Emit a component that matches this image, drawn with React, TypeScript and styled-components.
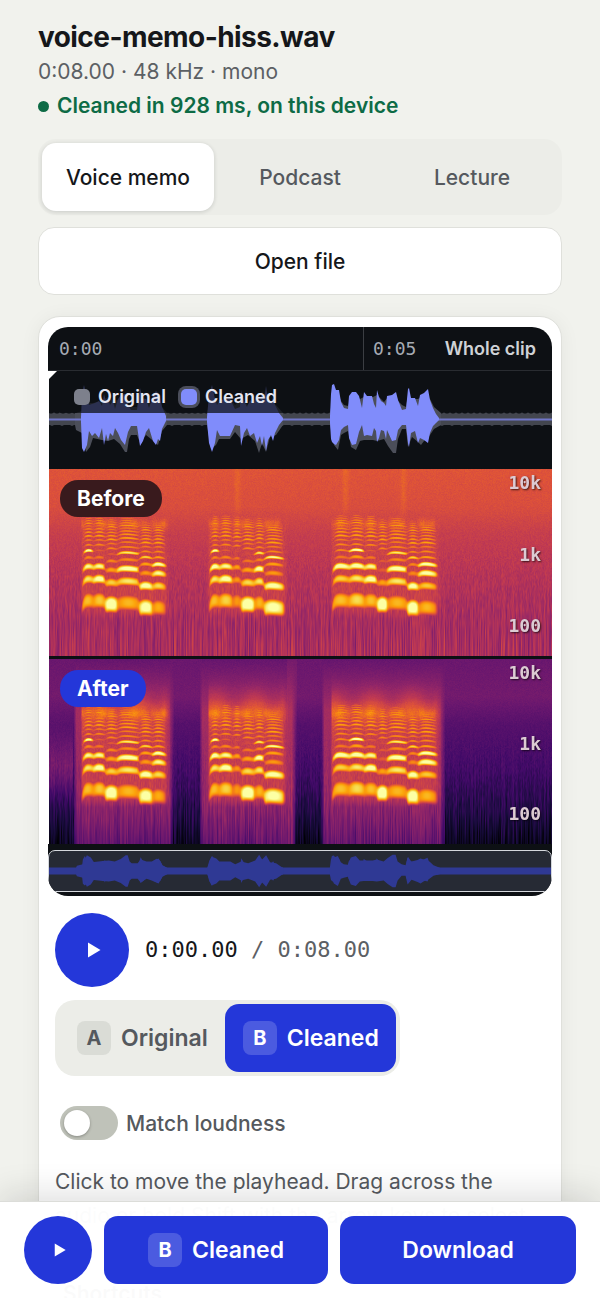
import React, { useLayoutEffect, useRef, useState } from 'react';
import styled, { createGlobalStyle, css } from 'styled-components';

const sans = "Inter, 'Liberation Sans', sans-serif";
const mono = "'DejaVu Sans Mono', 'Liberation Mono', monospace";
const blue = '#2437d9';

const GlobalStyle = createGlobalStyle`
  * { box-sizing: border-box; }
  body { margin: 0; background: #f1f2ed; color: #15171a; font-family: ${sans}; }
  button { border: 0; margin: 0; padding: 0; background: none; font: inherit; color: inherit; cursor: pointer; }
  h1, h2, p { margin: 0; }
`;

const Page = styled.div`
  height: 100vh;
  overflow-y: auto;
  scrollbar-width: none;
  padding: 19px 38px 0;
`;
const Title = styled.h1`
  font-size: 28px;
  line-height: 36px;
  font-weight: 700;
  letter-spacing: -0.02em;
`;
const Meta = styled.p`
  font-size: 21px;
  line-height: 34px;
  color: #5c6064;
`;
const Status = styled.p`
  display: flex;
  align-items: center;
  gap: 8px;
  font-size: 21px;
  line-height: 34px;
  font-weight: 600;
  color: #0d6b45;
  &::before { content: ''; width: 11px; height: 11px; border-radius: 50%; background: currentColor; }
`;
const Tabs = styled.div`
  display: grid;
  grid-template-columns: repeat(3, 1fr);
  margin-top: 16px;
  padding: 4px;
  border-radius: 18px;
  background: #ecede8;
`;
const Tab = styled.button<{ $on: boolean }>`
  height: 68px;
  border-radius: 14px;
  font-size: 21px;
  font-weight: 500;
  color: #55595e;
  ${p => p.$on && css`
    background: #fff;
    color: #15171a;
    box-shadow: 0 1px 4px rgba(20, 22, 26, 0.16);
  `}
`;
const OpenButton = styled.button`
  width: 100%;
  height: 68px;
  margin-top: 12px;
  border: 1px solid #dfe0db;
  border-radius: 16px;
  background: #fff;
  font-size: 21px;
  font-weight: 500;
`;
const Card = styled.main`
  margin-top: 21px;
  padding: 10px 9px;
  border: 1px solid #dfe0db;
  border-radius: 22px 22px 0 0;
  background: #fff;
  box-shadow: 0 2px 20px rgba(20, 22, 26, 0.06);
`;
const Editor = styled.section`
  overflow: hidden;
  border-radius: 20px;
  background: #0d1014;
`;
const Ruler = styled.div`
  display: grid;
  grid-template-columns: 5fr 3fr;
  height: 44px;
  border-bottom: 1px solid #292c31;
  color: #a6abb3;
  font: 18px/43px ${mono};
`;
const Tick = styled.div`
  display: flex;
  justify-content: space-between;
  padding: 0 16px 0 11px;
  & + & { padding-left: 9px; border-left: 1px solid #3b3e43; }
`;
const ClipButton = styled.button`
  color: #cfd2d6;
  font: 600 18px/43px ${sans};
`;
const Lane = styled.div`
  position: relative;
  margin-bottom: 3px;
`;
const WaveLane = styled(Lane)`
  height: 98px;
  margin-bottom: 0;
`;
const Drawing = styled.svg`
  display: block;
  width: 100%;
  height: 100%;
`;
const Spectrum = styled.canvas`
  display: block;
  width: 100%;
`;
const Legend = styled.div`
  position: absolute;
  top: 10px;
  left: 12px;
  display: flex;
  gap: 15px;
  padding: 0 14px;
  background: rgba(13, 16, 20, 0.74);
`;
const LegendItem = styled.button<{ $color: string; $ring?: boolean }>`
  display: flex;
  align-items: center;
  gap: 8px;
  font-size: 18px;
  line-height: 32px;
  font-weight: 600;
  color: #e4e6f2;
  &::before {
    content: '';
    width: 16px;
    height: 16px;
    border-radius: 5px;
    background: ${p => p.$color};
    box-shadow: ${p => (p.$ring ? '0 0 0 3px #4b4e5b' : 'none')};
  }
`;
const Pill = styled.h2<{ $bg: string }>`
  position: absolute;
  top: 11px;
  left: 12px;
  padding: 0 17px;
  border-radius: 18px;
  background: ${p => p.$bg};
  color: #fff;
  font-size: 21px;
  line-height: 37px;
  font-weight: 700;
`;
const Scale = styled.div`
  position: absolute;
  inset: 1px 11px 17px auto;
  display: flex;
  flex-direction: column;
  justify-content: space-between;
  align-items: flex-end;
  color: #dccbd3;
  font: 700 18px/26px ${mono};
  text-shadow: 1px 1px 2px rgba(0, 0, 0, 0.7);
`;
const Playhead = styled.div`
  position: absolute;
  top: 44px;
  left: 0;
  width: 1px;
  height: 473px;
  background: #fff;
  &::before {
    content: '';
    position: absolute;
    top: 0;
    left: 0;
    border-top: 9px solid #fff;
    border-right: 9px solid transparent;
  }
`;
const Stage = styled.div`
  position: relative;
`;
const Overview = styled.div`
  height: 42px;
  margin: 6px 0 4px;
  border: 1px solid #d5d8dd;
  border-radius: 7px;
  background: #262a34;
`;
const Controls = styled.div`
  padding: 17px 7px 0;
`;
const Transport = styled.div`
  display: flex;
  align-items: center;
  gap: 16px;
`;
const PlayButton = styled.button<{ $size: number }>`
  display: grid;
  place-items: center;
  flex: none;
  width: ${p => p.$size}px;
  height: ${p => p.$size}px;
  padding-left: 3px;
  border-radius: 50%;
  background: ${blue};
`;
const Clock = styled.div`
  font: 22px/34px ${mono};
  color: #5c6064;
  white-space: pre;
  b { color: #15171a; font-weight: 400; }
`;
const Compare = styled.div`
  display: inline-flex;
  margin-top: 13px;
  padding: 4px;
  border-radius: 20px;
  background: #ecede8;
`;
const Side = styled.button<{ $on: boolean }>`
  display: flex;
  align-items: center;
  gap: 10px;
  height: 68px;
  padding: 0 17px 0 18px;
  border-radius: 14px;
  font-size: 23px;
  font-weight: 600;
  color: ${p => (p.$on ? '#fff' : '#55595e')};
  background: ${p => (p.$on ? blue : 'transparent')};
`;
const Key = styled.kbd<{ $on: boolean }>`
  width: 34px;
  border-radius: 8px;
  background: ${p => (p.$on ? 'rgba(255,255,255,0.18)' : '#dadcd6')};
  font: 700 20px/34px ${sans};
  text-align: center;
`;
const LoudnessRow = styled.label`
  display: flex;
  align-items: center;
  gap: 8px;
  height: 68px;
  margin-top: 13px;
  padding-left: 5px;
  font-size: 21px;
  font-weight: 500;
  color: #55595e;
`;
const Switch = styled.input`
  appearance: none;
  width: 58px;
  height: 34px;
  margin: 0;
  padding: 4px;
  border-radius: 17px;
  background: #bfc2b9;
  &::before {
    content: '';
    display: block;
    width: 26px;
    height: 26px;
    border-radius: 50%;
    background: #fff;
    box-shadow: 0 1px 3px rgba(0, 0, 0, 0.3);
  }
  &:checked { background: ${blue}; }
  &:checked::before { margin-left: 24px; }
`;
const Hint = styled.p`
  margin-top: 8px;
  font-size: 21px;
  line-height: 34px;
  color: #55595e;
`;
const Shortcuts = styled.h2`
  padding: 44px 8px 0;
  font-size: 21px;
  line-height: 34px;
  font-weight: 600;
`;
const BottomBar = styled.footer`
  position: fixed;
  inset: auto 0 0;
  display: grid;
  grid-template-columns: 68px 19fr 20fr;
  gap: 12px;
  padding: 14px 24px;
  border-top: 1px solid #dcddd9;
  background: rgba(255, 255, 255, 0.98);
  box-shadow: 0 -8px 32px rgba(20, 22, 26, 0.13);
`;
const BarButton = styled.button`
  display: flex;
  align-items: center;
  justify-content: center;
  gap: 10px;
  height: 68px;
  border-radius: 14px;
  background: ${blue};
  color: #fff;
  font-size: 23px;
  font-weight: 600;
`;

/* Outline of each phrase, as [x, above, below] in lane units. */
type Env = [number, number, number][];
const phrases: Env[] = [
  [[33, 2, 3], [34, 26, 29], [36, 34, 33], [39, 22, 26], [41, 14, 12], [44, 15, 17], [47, 16, 14], [51, 18, 19], [54, 13, 9], [56, 25, 26], [58, 18, 15], [60, 20, 22], [62, 14, 14], [65, 18, 17], [67, 10, 9], [70, 20, 14], [73, 24, 21], [77, 25, 26], [80, 14, 13], [83, 9, 7], [89, 9, 7], [92, 31, 27], [95, 20, 22], [98, 20, 13], [101, 11, 9], [105, 24, 22], [108, 28, 26], [110, 26, 20], [112, 22, 22], [114, 12, 10], [118, 3, 2]],
  [[159, 2, 3], [161, 24, 24], [164, 34, 33], [167, 20, 24], [169, 14, 11], [172, 19, 17], [182, 20, 17], [187, 10, 6], [192, 12, 7], [193, 29, 27], [196, 18, 14], [199, 12, 9], [202, 19, 17], [206, 16, 14], [209, 25, 24], [212, 18, 17], [214, 28, 27], [216, 18, 17], [218, 33, 32], [220, 20, 21], [223, 16, 16], [225, 22, 22], [227, 14, 14], [231, 6, 6], [235, 1, 1]],
  [[282, 3, 4], [283, 25, 20], [284, 34, 23], [286, 35, 25], [288, 29, 26], [291, 29, 21], [293, 17, 11], [296, 11, 8], [300, 10, 6], [301, 23, 19], [304, 27, 26], [308, 27, 25], [311, 23, 13], [314, 11, 6], [316, 27, 17], [319, 23, 16], [324, 23, 17], [326, 15, 9], [328, 11, 12], [329, 29, 23], [331, 22, 19], [333, 18, 11], [336, 16, 12], [338, 13, 20], [339, 23, 11], [344, 24, 22], [348, 27, 21], [350, 19, 11], [354, 9, 6], [358, 10, 6], [360, 30, 24], [361, 31, 28], [363, 21, 14], [367, 21, 12], [370, 13, 24], [372, 24, 19], [376, 26, 21], [380, 30, 24], [382, 19, 14], [385, 11, 7], [388, 5, 4], [391, 1, 1]],
];
/* The original recording under the cleaned one; it mostly shows below the axis. */
const originals: Env[] = [
  [[27, 6, 6], [28, 6, 11], [34, 8, 14], [38, 20, 33], [42, 16, 28], [45, 16, 19], [54, 18, 21], [60, 22, 22], [66, 18, 20], [72, 20, 25], [77, 25, 33], [79, 20, 33], [81, 14, 20], [83, 12, 16], [89, 12, 16], [92, 24, 24], [98, 20, 16], [103, 14, 20], [110, 24, 26], [114, 12, 12], [119, 6, 6]],
  [[159, 6, 6], [163, 20, 30], [168, 18, 26], [171, 19, 20], [182, 20, 20], [187, 14, 13], [193, 20, 20], [200, 14, 16], [207, 20, 22], [211, 22, 34], [214, 20, 24], [218, 28, 33], [222, 18, 18], [228, 14, 16], [235, 6, 6]],
  [[282, 6, 6], [286, 28, 26], [290, 26, 31], [293, 18, 16], [296, 14, 14], [300, 13, 12], [303, 22, 28], [308, 24, 31], [312, 20, 22], [316, 22, 21], [325, 22, 21], [329, 24, 22], [336, 17, 20], [340, 22, 27], [345, 24, 34], [348, 24, 34], [350, 18, 20], [354, 14, 10], [358, 12, 10], [360, 24, 28], [364, 20, 18], [370, 20, 23], [373, 22, 26], [376, 24, 22], [382, 20, 16], [386, 12, 10], [393, 6, 6]],
];
const shape = (env: Env, mid: number, k: number) =>
  'M' + env.map(([x, a]) => `${x} ${mid - a * k}`).join('L') + 'L' +
  [...env].reverse().map(([x, , b]) => `${x} ${mid + b * k}`).join('L') + 'Z';
const hiss = (seed: number) =>
  'M0 48' + Array.from({ length: 253 }, (_, i) => `L${i * 2} ${42.5 - ((i * seed) % 3 === 0 ? 1 : 0)}`).join('') +
  Array.from({ length: 253 }, (_, i) => `L${504 - i * 2} ${54 + ((i * seed) % 5 === 0 ? 1 : 0)}`).join('') + 'Z';

const Waveform = () => (
  <Drawing viewBox="0 0 504 98" preserveAspectRatio="none" role="img" aria-label="Waveform">
    <path d={hiss(7)} fill="#43464f" />
    {originals.map((p, i) => <path key={i} d={shape(p, 48, 1)} fill="#4b4e59" />)}
    <path d="M0 47.5h504v2H0z" fill="#7076c9" />
    {phrases.map((p, i) => <path key={i} d={shape(p, 48, 1)} fill="#808cfb" />)}
  </Drawing>
);
const OverviewWave = () => (
  <Drawing viewBox="0 0 504 40" preserveAspectRatio="none" role="img" aria-label="Overview">
    <path d="M0 16.500h504v7H0z" fill="#2f3994" />
    {phrases.map((p, i) => <path key={i} d={shape(p.map(([x, a, b]) => [x, Math.max(a, 8), Math.max(b, 8)]), 20, 0.44)} fill="#2f3994" />)}
    {originals.map((p, i) => <path key={i} d={shape(p.map(([x, a, b]) => [x, Math.max(a, b), b]), 20, 0.48)} fill="#2f3994" />)}
  </Drawing>
);

/* Notes of the phrases: start, end, pitch in Hz, strength of the first harmonics. */
type Note = [number, number, number, number[]];
const notes: Note[] = [
  [33, 45, 236, [0.86, 0.95, 1, 0.75, 1.05]], [45, 57, 234, [0.88, 1.05, 1, 0.72, 0.65]], [57, 69, 208, [1.08, 0.9, 0.8, 0.75, 0.65]],
  [69, 91, 216, [0.84, 0.95, 1.05, 0.75, 0.95]], [91, 104, 188, [1.05, 1.05, 0.78, 0.8, 0.9]], [104, 116, 187, [0.82, 0.92, 1, 1.05, 0.8]],
  [160, 171, 236, [0.86, 0.95, 1.05, 0.75, 1.05]], [171, 184, 234, [0.9, 1.05, 1, 0.75, 0.65]], [184, 193, 228, [0.78, 0.78, 0.8, 0.72, 0.6]],
  [193, 206, 208, [1.08, 0.92, 0.8, 0.72, 0.6]], [206, 216, 216, [0.84, 0.95, 1.05, 0.75, 0.95]], [216, 234, 187, [1.04, 1.04, 0.78, 0.8, 1]],
  [283, 301, 236, [0.86, 0.9, 1.05, 0.72, 0.75]], [301, 316, 237, [0.92, 0.95, 1.05, 0.8, 1.05]], [316, 329, 232, [0.86, 1.05, 1, 0.72, 0.65]],
  [329, 339, 208, [1.1, 0.8, 0.65, 0.65, 0.6]], [339, 359, 216, [0.84, 0.95, 1.05, 0.75, 0.95]], [359, 370, 186, [1.08, 1.04, 0.75, 0.75, 0.9]],
  [370, 387, 187, [0.84, 0.88, 1.04, 1.05, 0.8]],
];
const spans = [[33, 116, 25, 126], [160, 234, 151, 248], [283, 387, 273, 397]];
const inferno = [[0, 0, 4], [22, 11, 57], [66, 10, 104], [106, 23, 110], [147, 38, 103], [188, 55, 84], [221, 81, 58], [243, 120, 25], [252, 165, 10], [246, 215, 70], [252, 255, 164]];

const noise = (x: number, y: number) => {
  let h = Math.imul(x + 7919, 374761393) ^ Math.imul(y + 104729, 668265263);
  h = Math.imul(h ^ (h >>> 13), 1274126177);
  return ((h ^ (h >>> 16)) >>> 0) / 4294967295;
};
const clamp = (v: number) => Math.max(0, Math.min(1, v));
const ramp = (v: number, pts: number[][]) => {
  for (let i = 1; i < pts.length; i++) {
    if (v <= pts[i][0]) {
      const t = (v - pts[i - 1][0]) / (pts[i][0] - pts[i - 1][0]);
      return pts[i - 1][1] + t * (pts[i][1] - pts[i - 1][1]);
    }
  }
  return pts[pts.length - 1][1];
};
/* Noise that is blended between neighbouring frequency bins. */
const binNoise = (x: number, bin: number, seed: number) => {
  const i = Math.floor(bin);
  const t = bin - i;
  return noise(x, i + seed) * (1 - t) + noise(x, i + 1 + seed) * t - 0.5;
};

function voice(x: number, y: number) {
  const note = notes.find(n => x >= n[0] && x < n[1]) ?? notes.find(n => x >= n[1] && x < n[1] + 6 && !notes.some(m => m[0] === n[1]));
  if (!note) return 0;
  const [start, end, pitch, gains] = note;
  const first = spans.some(s => s[0] === start);
  const tail = x >= end ? 1 - (x - end) / 7 : 1;
  const t = (x - start) / (end - start);
  const glide = (first ? -9 * Math.exp(-(x - start) / 2) : 0) - 2 * Math.exp(-(x - start) / 2) + Math.sin(t * 3) * 0.8 - t * 1.5;
  let best = 0;
  for (let k = 1; k < 16; k++) {
    const cy = 158 - 72 * Math.log10((pitch * k) / 100) - glide;
    const w = k === 1 ? 10 : k === 2 ? 6 : k === 3 ? 4.7 : k === 4 ? 3.3 : Math.max(1.5, 2.9 - k * 0.1);
    const g = k <= 5 ? gains[k - 1] : 0.8 - (k % 4) * 0.025 - Math.max(0, k - 10) * 0.01;
    const d = Math.abs(y - cy) / w;
    best = Math.max(best, g * Math.exp(-(d ** (k === 1 ? 3 : 2.3))));
  }
  const pulse = 0.88 + 0.12 * Math.sin(clamp(t) * Math.PI);
  return best * tail * pulse;
}

function level(x: number, y: number, cleaned: boolean) {
  const freq = 100 * 10 ** ((158 - y) / 72);
  const bin = freq / 28;
  const low = clamp((y - 70) / 110);
  const grain = binNoise(x, bin, 0) * 0.7 + binNoise(x, bin / 3, 900) * 0.5;
  const stripe = noise(x, 5000) - 0.5;
  const v = y / 188;
  const sound = voice(x, y) * 0.4 + (voice(x - 1, y) + voice(x + 1, y)) * 0.2 + (voice(x - 2, y) + voice(x + 2, y)) * 0.1;
  let base: number;
  if (!cleaned) {
    base = ramp(v, [[0, 0.605], [0.2, 0.585], [0.34, 0.53], [0.6, 0.48], [0.85, 0.44], [1, 0.455]]);
    base += grain * (0.05 + low * 0.09) + stripe * low * low * 0.12;
    for (const cx of [189, 297, 355]) base += 0.04 * Math.exp(-(((x - cx) / 3) ** 2)) * clamp((70 - y) / 40);
  } else {
    const quiet = ramp(v, [[0, 0.3], [0.2, 0.32], [0.35, 0.25], [0.6, 0.2], [0.82, 0.13], [1, 0.05]]) + (x < 25 ? 0.12 * Math.exp(-(((v - 0.58) / 0.15) ** 2)) : 0);
    let open = 0;
    for (const [, , a, b] of spans) open = Math.max(open, clamp((x - a) / 3) * clamp((b - x) / 5));
    const loud = ramp(v, [[0, 0.29], [0.15, 0.37], [0.28, 0.44], [0.5, 0.42], [0.75, 0.4], [1, 0.28]]);
    base = quiet + (loud - quiet) * open;
    base += grain * (0.035 + low * 0.07) + stripe * low * 0.09;
    base += x > 238 && x < 249 ? 0.03 : 0;
  }
  const span = spans.find(s => x >= s[0] && x < s[1] + 6);
  if (span) {
    const edge = clamp((x - span[0] + 1) / 2) * clamp((span[1] + 6 - x) / 6);
    const body = clamp((y - 40) / 16) * clamp((150 - y) / 14);
    base += (0.55 + grain * 0.08 - base) * body * edge * 0.85;
    const bump = 0.55 + 0.3 * Math.sin(x * 0.22 + span[0]) + 0.15 * Math.sin(x * 0.61);
    base += Math.exp(-(((y - 55) / 5) ** 2)) * bump * 0.12 * edge;
    if (cleaned) base += 0.13 * Math.exp(-(((y - 46) / 17) ** 2)) * edge * (0.7 + 0.3 * Math.sin(x * 0.16));
  }
  return sound > 0.05 ? Math.max(base, base + (Math.min(1, sound) - base) * clamp(sound * 1.3)) : base;
}

const Spectrogram = ({ cleaned, rows }: { cleaned: boolean; rows: number }) => {
  const ref = useRef<HTMLCanvasElement>(null);
  useLayoutEffect(() => {
    const ctx = ref.current?.getContext('2d');
    if (!ctx) return;
    const image = ctx.createImageData(504, rows);
    for (let y = 0; y < rows; y++) {
      for (let x = 0; x < 504; x++) {
        const s = clamp(level(x, (y * 188) / rows, cleaned)) * 9.999;
        const i = Math.floor(s);
        const at = (y * 504 + x) * 4;
        for (let c = 0; c < 3; c++) image.data[at + c] = inferno[i][c] + (inferno[i + 1][c] - inferno[i][c]) * (s - i);
        image.data[at + 3] = 255;
      }
    }
    ctx.putImageData(image, 0, 0);
  }, [cleaned, rows]);
  return <Spectrum ref={ref} width={504} height={rows} role="img" aria-label={cleaned ? 'Spectrogram after cleaning' : 'Spectrogram before cleaning'} />;
};

const Frequencies = () => <Scale><span>10k</span><span>1k</span><span>100</span></Scale>;
const PlayIcon = ({ size }: { size: number }) => (
  <svg width={size} height={size} viewBox="0 0 16 16" aria-hidden="true"><path d="M2 0.500v15L14.500 8z" fill="#fff" /></svg>
);

const presets = ['Voice memo', 'Podcast', 'Lecture'];

export default function App() {
  const [preset, setPreset] = useState(presets[0]);
  const [side, setSide] = useState<'A' | 'B'>('B');
  const sideName = side === 'A' ? 'Original' : 'Cleaned';
  return (
    <>
      <GlobalStyle />
      <Page>
        <header>
          <Title>voice-memo-hiss.wav</Title>
          <Meta>0:08.00 · 48 kHz · mono</Meta>
          <Status>Cleaned in 928 ms, on this device</Status>
          <Tabs role="group" aria-label="Example clips">
            {presets.map(p => <Tab key={p} $on={p === preset} aria-pressed={p === preset} onClick={() => setPreset(p)}>{p}</Tab>)}
          </Tabs>
          <OpenButton>Open file</OpenButton>
        </header>
        <Card>
          <Editor>
            <Stage>
              <Ruler>
                <Tick>0:00</Tick>
                <Tick>0:05<ClipButton>Whole clip</ClipButton></Tick>
              </Ruler>
              <WaveLane>
                <Waveform />
                <Legend>
                  <LegendItem $color="#7d808c">Original</LegendItem>
                  <LegendItem $color="#808cfb" $ring>Cleaned</LegendItem>
                </Legend>
              </WaveLane>
              <Lane><Spectrogram cleaned={false} rows={187} /><Pill $bg="#391a1d">Before</Pill><Frequencies /></Lane>
              <Lane><Spectrogram cleaned rows={185} /><Pill $bg={blue}>After</Pill><Frequencies /></Lane>
              <Playhead />
            </Stage>
            <Overview><OverviewWave /></Overview>
          </Editor>
          <Controls>
            <Transport>
              <PlayButton $size={74} aria-label="Play"><PlayIcon size={16} /></PlayButton>
              <Clock><b>0:00.00</b> / 0:08.00</Clock>
            </Transport>
            <Compare role="group" aria-label="Compare">
              <Side $on={side === 'A'} onClick={() => setSide('A')}><Key $on={side === 'A'}>A</Key>Original</Side>
              <Side $on={side === 'B'} onClick={() => setSide('B')}><Key $on={side === 'B'}>B</Key>Cleaned</Side>
            </Compare>
            <LoudnessRow><Switch type="checkbox" role="switch" />Match loudness</LoudnessRow>
            <Hint>Click to move the playhead. Drag across the audio or hold Shift with the arrow keys to select.</Hint>
            <Shortcuts>Shortcuts</Shortcuts>
          </Controls>
        </Card>
      </Page>
      <BottomBar>
        <PlayButton $size={68} aria-label="Play"><PlayIcon size={14} /></PlayButton>
        <BarButton onClick={() => setSide(side === 'A' ? 'B' : 'A')}><Key $on>{side}</Key>{sideName}</BarButton>
        <BarButton>Download</BarButton>
      </BottomBar>
    </>
  );
}
